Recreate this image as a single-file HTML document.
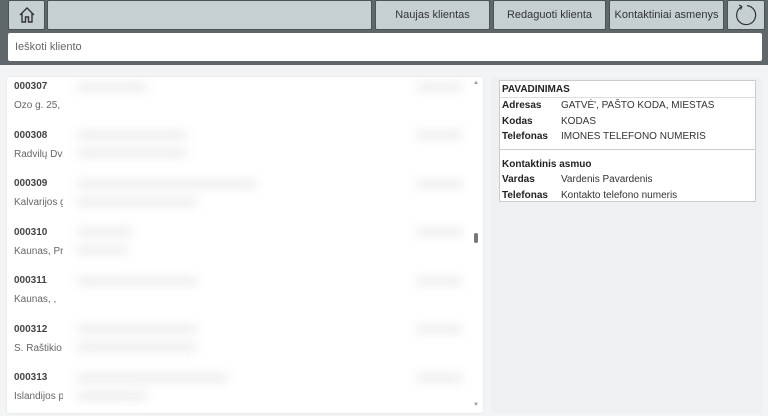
<!DOCTYPE html>
<html><head><meta charset="utf-8"><style>
*{box-sizing:border-box;margin:0;padding:0}
body{width:768px;height:416px;background:#f3f4f5;font-family:"Liberation Sans","DejaVu Sans",sans-serif;position:relative;overflow:hidden}
.top{position:absolute;left:0;top:0;width:768px;height:65px;background:#5f676b}
.btn{position:absolute;top:0;height:30px;background:#c6d0d3;border:1px solid #4a5256;border-radius:2px;font-size:11px;color:#333;display:flex;align-items:center;justify-content:center}
.search{position:absolute;left:8px;top:33px;width:754px;height:28px;background:#fff;border-radius:2px;font-size:11px;color:#666;padding:8px 0 0 7px}
.list{position:absolute;left:7px;top:77px;width:476px;height:336px;background:#fff;border-radius:3px;box-shadow:0 0 2px #ddd;overflow:hidden}
.row{position:absolute;left:7px;font-size:10px}
.row b{color:#444;display:block;font-size:10px}
.row span{color:#666;display:block;margin-top:8px}
.blur{position:absolute;background:#c8c8c8;filter:blur(5px);opacity:.35;height:8px}
.cover{position:absolute;left:56px;top:0;width:410px;height:330px;background:#fff}
.right{position:absolute;left:491px;top:77px;width:271px;height:336px;background:#eef0f1;border-radius:3px}
.info{position:absolute;left:499px;top:80px;width:257px;height:122px;background:#fff;border:1px solid #ccc;font-size:10px;color:#222}
.info .l{position:absolute;left:2px;font-weight:bold}
.info .v{position:absolute;left:61px;color:#333}
</style></head><body>
<div class="top"></div>
<div class="btn" style="left:8px;width:37px"><svg width="20" height="20" viewBox="0 0 20 20"><path d="M3 10 L10 3 L17 10 M5 8 V17 H8.5 V12 H11.5 V17 H15 V8" fill="none" stroke="#333" stroke-width="1.4"/></svg></div>
<div class="btn" style="left:47px;width:325px"></div>
<div class="btn" style="left:375px;width:115px">Naujas klientas</div>
<div class="btn" style="left:493px;width:113px">Redaguoti klienta</div>
<div class="btn" style="left:609px;width:115px">Kontaktiniai asmenys</div>
<div class="btn" style="left:727px;width:38px"><svg width="24" height="24" viewBox="0 0 24 24"><path d="M8 3.5 A9.5 9.5 0 1 0 13 2.6" fill="none" stroke="#333" stroke-width="1.2"/><path d="M8 3.5 L5 2 M8 3.5 L6.5 6.5" fill="none" stroke="#333" stroke-width="1.2"/></svg></div>
<div class="search">Ieškoti kliento</div>
<div class="list">
<div class="row" style="top:4px"><b>000307</b><span>Ozo g. 25, I</span></div>
<div class="row" style="top:53px"><b>000308</b><span>Radvilų Dva</span></div>
<div class="row" style="top:101px"><b>000309</b><span>Kalvarijos g</span></div>
<div class="row" style="top:150px"><b>000310</b><span>Kaunas, Pra</span></div>
<div class="row" style="top:198px"><b>000311</b><span>Kaunas, ,</span></div>
<div class="row" style="top:247px"><b>000312</b><span>S. Raštikio g</span></div>
<div class="row" style="top:295px"><b>000313</b><span>Islandijos p</span></div>
<div class="cover"></div>
<div class="blur" style="left:70px;top:6px;width:70px"></div>
<div class="blur" style="left:70px;top:54px;width:110px"></div><div class="blur" style="left:70px;top:72px;width:110px"></div>
<div class="blur" style="left:70px;top:103px;width:180px"></div><div class="blur" style="left:70px;top:121px;width:120px"></div>
<div class="blur" style="left:70px;top:151px;width:55px"></div><div class="blur" style="left:70px;top:169px;width:50px"></div>
<div class="blur" style="left:70px;top:200px;width:120px"></div>
<div class="blur" style="left:70px;top:248px;width:120px"></div><div class="blur" style="left:70px;top:266px;width:120px"></div>
<div class="blur" style="left:70px;top:297px;width:150px"></div><div class="blur" style="left:70px;top:315px;width:70px"></div>
<div class="blur" style="left:410px;top:6px;width:45px"></div><div class="blur" style="left:410px;top:54px;width:45px"></div><div class="blur" style="left:410px;top:103px;width:45px"></div><div class="blur" style="left:410px;top:151px;width:45px"></div><div class="blur" style="left:410px;top:200px;width:45px"></div><div class="blur" style="left:410px;top:248px;width:45px"></div><div class="blur" style="left:410px;top:297px;width:45px"></div>
<div style="position:absolute;left:467px;top:156px;width:4px;height:10px;background:#777;border-radius:2px"></div>
<div style="position:absolute;left:466px;top:3px;font-size:6px;color:#999">▲</div>
<div style="position:absolute;left:466px;top:325px;font-size:6px;color:#999">▼</div>
</div>
<div class="right"></div>
<div class="info">
<div class="l" style="top:3px">PAVADINIMAS</div>
<div style="position:absolute;left:0;right:0;top:16px;border-top:1px solid #ddd"></div>
<div class="l" style="top:19px">Adresas</div><div class="v" style="top:19px">GATVĖ', PAŠTO KODA, MIESTAS</div>
<div class="l" style="top:35px">Kodas</div><div class="v" style="top:35px">KODAS</div>
<div class="l" style="top:50px">Telefonas</div><div class="v" style="top:50px">IMONES TELEFONO NUMERIS</div>
<div style="position:absolute;left:0;right:0;top:68px;border-top:1px solid #ccc"></div>
<div class="l" style="top:78px">Kontaktinis asmuo</div>
<div class="l" style="top:93px">Vardas</div><div class="v" style="top:93px">Vardenis Pavardenis</div>
<div class="l" style="top:109px">Telefonas</div><div class="v" style="top:109px">Kontakto telefono numeris</div>
</div>
</body></html>
